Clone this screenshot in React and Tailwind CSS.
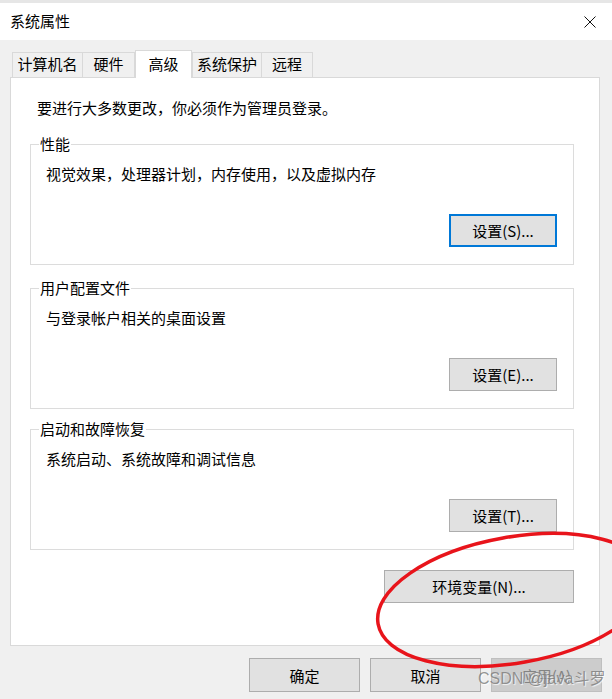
import React from 'react';

const font = { fontFamily: '"Noto Sans CJK SC", "Noto Sans", sans-serif' };

function Btn({ children, focused, disabled, className = '' }) {
  let look = 'border border-[#adadad] bg-[#e1e1e1] text-black';
  if (focused) look = 'border-2 border-[#0078d7] bg-[#e1e1e1] text-black';
  if (disabled) look = 'border border-[#bfbfbf] bg-[#cccccc] text-[#838383]';
  return (
    <div className={`flex items-center justify-center text-[15px] leading-none ${look} ${className}`}>
      {children}
    </div>
  );
}

function GroupBox({ title, text, button, focused, className = '' }) {
  return (
    <div className={`relative flex h-[121px] flex-col border border-[#dcdcdc] ${className}`}>
      <span className="absolute -top-[11px] left-[8px] bg-white px-[1px] text-[15px] leading-[20px]">
        {title}
      </span>
      <p className="pl-[15px] pt-[19px] text-[15px] leading-[20px]">{text}</p>
      <Btn focused={focused} className="mt-auto mb-[17px] mr-[16px] h-[33px] w-[108px] self-end">
        {button}
      </Btn>
    </div>
  );
}

const tabs = ['计算机名', '硬件', '高级', '系统保护', '远程'];
const tabWidths = ['w-[71px]', 'w-[53px]', 'w-[57px]', 'w-[70px]', 'w-[52px]'];

export default function App() {
  return (
    <div className="relative h-[699px] w-[612px] overflow-hidden bg-[#f0f0f0] text-black" style={font}>
      <div className="h-[3px] bg-[#e6e6e6]" />
      {/* title bar */}
      <div className="flex h-[37px] items-center justify-between bg-white pl-[10px] pr-[16px]">
        <span className="text-[15px]">系统属性</span>
        <svg width="12" height="12" viewBox="0 0 12 12">
          <path d="M0.5 0.5 L11.5 11.5 M11.5 0.5 L0.5 11.5" stroke="#111" strokeWidth="1" />
        </svg>
      </div>

      {/* tabs */}
      <div className="flex h-[37px] items-end pl-[12px]">
        {tabs.map((t, i) =>
          i === 2 ? (
            <div
              key={t}
              className={`relative z-10 -mb-px flex h-[28px] items-start justify-center border border-b-0 border-[#d9d9d9] bg-white pt-[2px] text-[15px] ${tabWidths[i]}`}
            >
              {t}
            </div>
          ) : (
            <div
              key={t}
              className={`flex h-[25px] items-center justify-center border border-b-0 border-[#d9d9d9] bg-[#f0f0f0] pb-[1px] text-[15px] ${tabWidths[i]} ${i === 0 || i === 3 ? '' : '-ml-px'}`}
            >
              {t}
            </div>
          )
        )}
      </div>

      {/* panel */}
      <div className="ml-[10px] mr-[12px] flex h-[569px] flex-col border border-[#d9d9d9] bg-white">
        <p className="pl-[26px] pt-[20px] text-[15px] leading-[20px]">要进行大多数更改，你必须作为管理员登录。</p>
        <div className="ml-[19px] mr-[25px] mt-[26px] flex flex-col">
          <GroupBox title="性能" text="视觉效果，处理器计划，内存使用，以及虚拟内存" button="设置(S)..." focused />
          <GroupBox className="mt-[23px]" title="用户配置文件" text="与登录帐户相关的桌面设置" button="设置(E)..." />
          <GroupBox className="mt-[20px]" title="启动和故障恢复" text="系统启动、系统故障和调试信息" button="设置(T)..." />
        </div>
        <Btn className="ml-[373px] mt-[20px] h-[33px] w-[190px]">环境变量(N)...</Btn>
      </div>

      {/* dialog buttons */}
      <div className="mt-[12px] flex justify-end gap-[10px] pr-[10px]">
        <Btn className="h-[34px] w-[111px]">确定</Btn>
        <Btn className="h-[34px] w-[111px]">取消</Btn>
        <Btn disabled className="h-[34px] w-[111px]">应用(A)</Btn>
      </div>

      {/* red annotation ellipse */}
      <svg className="pointer-events-none absolute left-0 top-0" width="612" height="699">
        <ellipse
          cx="514"
          cy="600"
          rx="138"
          ry="63"
          transform="rotate(-10 514 600)"
          fill="none"
          stroke="#e8141b"
          strokeWidth="3.5"
        />
      </svg>

      {/* watermark */}
      <span
        className="pointer-events-none absolute left-[478px] top-[669px] text-[16px] leading-[20px] text-[#7a7a7a]/80"
        style={{ fontFamily: '"Liberation Sans", "Noto Sans CJK SC", sans-serif', textShadow: '1px 1px 1px rgba(255,255,255,0.8)' }}
      >
        CSDN @java斗罗
      </span>
    </div>
  );
}
